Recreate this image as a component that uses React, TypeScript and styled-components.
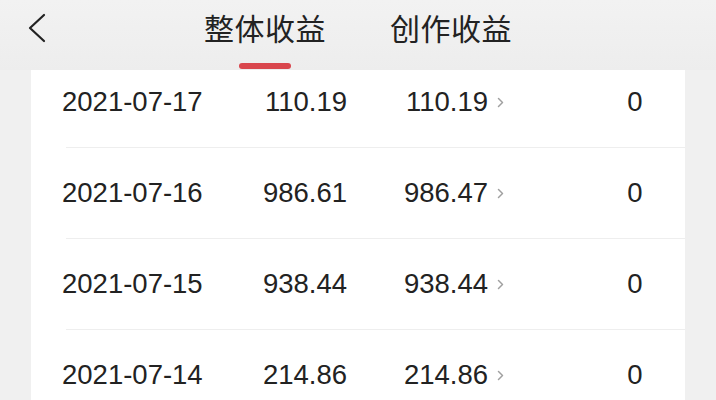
import React from "react";
import styled, { createGlobalStyle } from "styled-components";

const GlobalStyle = createGlobalStyle`
  html, body { margin: 0; padding: 0; background: #f0f0f0; overflow: hidden; }
  * { box-sizing: border-box; }
`;

const Page = styled.div`
  width: 716px;
  height: 400px;
  overflow: hidden;
  background: #f0f0f0;
  font-family: "Liberation Sans", Arial, "Noto Sans CJK SC", sans-serif;
  color: #222;
`;

const Header = styled.header`
  height: 70px;
  display: flex;
  align-items: flex-start;
  padding-left: 27px;
  background: linear-gradient(#f2f2f2, #ededed);
`;

const BackButton = styled.button`
  margin-top: 13px;
  width: 20px;
  height: 30px;
  padding: 0;
  border: 0;
  background: transparent;
  display: flex;
  align-items: center;
  justify-content: flex-start;
`;

const Tabs = styled.nav`
  display: flex;
  gap: 64px;
  margin-left: 157px;
`;

const Tab = styled.div`
  display: flex;
  flex-direction: column;
  align-items: center;
  padding-top: 12px;
`;

const TabLabel = styled.span`
  font-family: "Noto Sans CJK SC", sans-serif;
  font-size: 30px;
  line-height: 30px;
  letter-spacing: 0.5px;
  color: #222;
`;

const TabBar = styled.span<{ $active: boolean }>`
  margin-top: 21px;
  width: 52px;
  height: 6px;
  border-radius: 3px;
  background: ${(p) => (p.$active ? "#d9464d" : "transparent")};
`;

const Card = styled.section`
  margin-left: 31px;
  width: 654px;
  height: 330px;
  background: #fff;
  overflow: hidden;
`;

const List = styled.div`
  margin-top: -13px;
`;

const Row = styled.div`
  height: 90px;
  padding-left: 31px;
  display: grid;
  grid-template-columns: 180px 105px 141px 1fr 100px;
  align-items: center;
  font-size: 27.5px;
  line-height: 1;
  color: #222;
`;

const DateCell = styled.span``;

const NumCell = styled.span`
  text-align: right;
`;

const Chevron = styled.span`
  display: flex;
  align-items: center;
  padding-left: 9px;
`;

const ZeroCell = styled.span`
  text-align: center;
  font-family: "Liberation Sans", Arial, sans-serif;
`;

const Divider = styled.div`
  margin-left: 35px;
  height: 1px;
  background: #eeeeee;
`;

const rows = [
  { date: "2021-07-17", total: "110.19", create: "110.19", other: "0" },
  { date: "2021-07-16", total: "986.61", create: "986.47", other: "0" },
  { date: "2021-07-15", total: "938.44", create: "938.44", other: "0" },
  { date: "2021-07-14", total: "214.86", create: "214.86", other: "0" },
];

export default function App() {
  return (
    <Page>
      <GlobalStyle />
      <Header>
        <BackButton aria-label="back">
          <svg width="20" height="30" viewBox="0 0 20 30" fill="none">
            <path d="M17 2 L3 15 L17 28" stroke="#222" strokeWidth="2.2" strokeLinecap="round" strokeLinejoin="round" />
          </svg>
        </BackButton>
        <Tabs>
          <Tab>
            <TabLabel>整体收益</TabLabel>
            <TabBar $active />
          </Tab>
          <Tab>
            <TabLabel>创作收益</TabLabel>
            <TabBar $active={false} />
          </Tab>
        </Tabs>
      </Header>
      <Card>
        <List>
          {rows.map((r, i) => (
            <React.Fragment key={r.date}>
              {i > 0 && <Divider />}
              <Row>
                <DateCell>{r.date}</DateCell>
                <NumCell>{r.total}</NumCell>
                <NumCell>{r.create}</NumCell>
                <Chevron>
                  <svg width="7" height="11" viewBox="0 0 7 11" fill="none">
                    <path d="M1.5 1.5 L5.5 5.5 L1.5 9.5" stroke="#a0a0a0" strokeWidth="1.5" strokeLinecap="round" strokeLinejoin="round" />
                  </svg>
                </Chevron>
                <ZeroCell>{r.other}</ZeroCell>
              </Row>
            </React.Fragment>
          ))}
        </List>
      </Card>
    </Page>
  );
}
